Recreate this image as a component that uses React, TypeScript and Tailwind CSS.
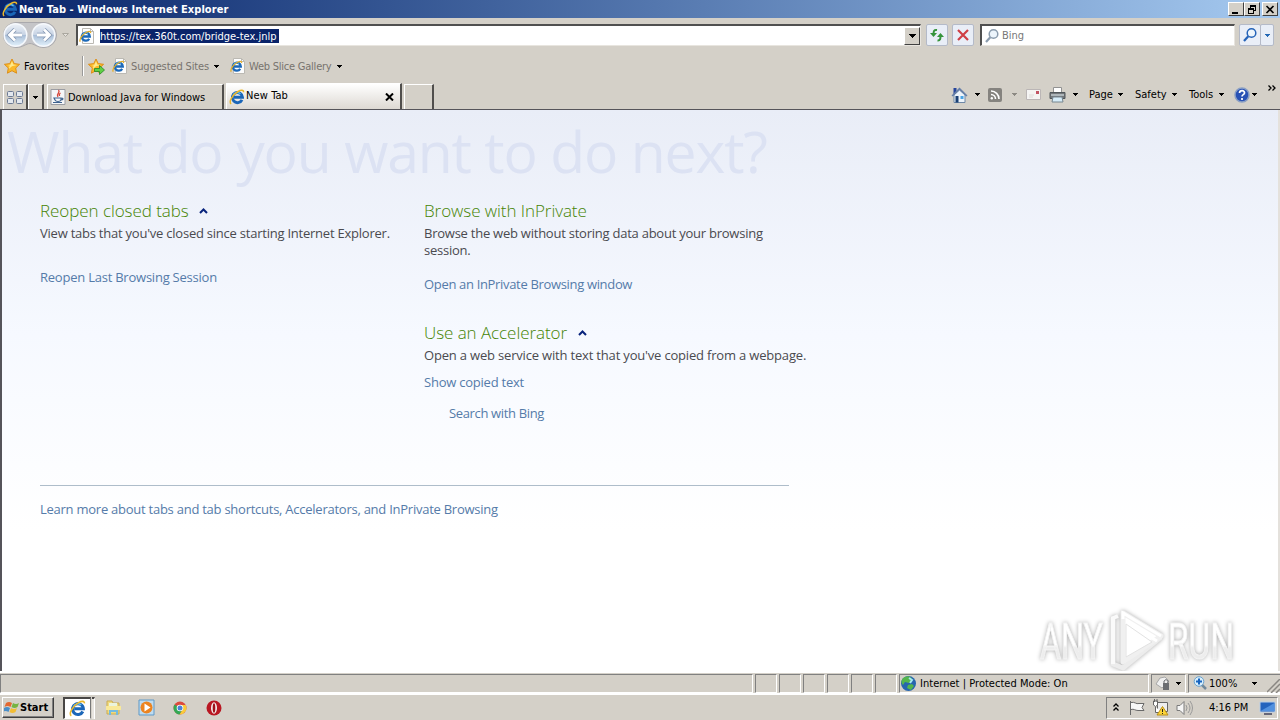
import type { ReactNode } from "react";

function Caret({ className = "", color = "#000" }: { className?: string; color?: string }) {
  return (
    <svg className={`shrink-0 ${className}`} width="5" height="3" viewBox="0 0 5 3" shapeRendering="crispEdges">
      <path d="M0 0h5v1H4v1H3v1H2V2H1V1H0z" fill={color} />
    </svg>
  );
}

function IeLogo({ size = 16, className = "" }: { size?: number; className?: string }) {
  return (
    <svg className={`shrink-0 ${className}`} width={size} height={size} viewBox="0 0 16 16" fill="none">
      <path d="M13 10.8A5.1 5.1 0 1 1 13.500 8.300H5" stroke="#1b66b8" strokeWidth="2.900" />
      <path d="M4 6.500a4.800 4.800 0 0 1 7.500-1.800" stroke="#62c3f2" strokeWidth="1.300" />
      <path d="M2.200 14.800C-.8 13.300 3.400 5.600 9 2.500c3-1.700 5.700-1.800 5.500.7" stroke="#eab72c" strokeWidth="1.500" />
    </svg>
  );
}

function IePage({ className = "" }: { className?: string }) {
  return (
    <svg className={`shrink-0 ${className}`} width="16" height="16" viewBox="0 0 16 16" fill="none">
      <path d="M3.500.500h8l3 3v12h-11z" fill="#fdfdfd" stroke="#bbb9b3" />
      <path d="M11.500.500v3h3" stroke="#bbb9b3" />
      <path d="M10.200 10.800A4 4 0 1 1 10.800 8.500H3.500" stroke="#1c69b9" strokeWidth="2.300" />
      <path d="M3.500 6.800a3.800 3.800 0 0 1 5.500-1.500" stroke="#62b9ea" />
      <path d="M1.300 13.600C-.4 11.600 4 5.700 8 4c2.500-1 4-.6 3.500 1" stroke="#e4ae28" strokeWidth="1.300" />
    </svg>
  );
}

function Star({ add = false, className = "" }: { add?: boolean; className?: string }) {
  return (
    <svg className={`shrink-0 ${className}`} width="17" height="17" viewBox="0 0 17 17">
      <path d="M8 1l2.200 4.600 5.400.7-3.900 3.700.9 5.200L8 12.700l-4.600 2.500.9-5.200L.4 6.300l5.400-.7z" fill="#fbb929" stroke="#dc8f1c" />
      <path d="M8 3l1.300 3.500 3.600.4L8 8.300 4.800 11l.9-3.400L3.400 7l3-.3z" fill="#ffe98a" />
      {add && <path d="M6.500 10.500h5v-3l5 4.500-5 4.500v-3h-5z" fill="#5fd044" stroke="#248624" strokeWidth=".8" />}
    </svg>
  );
}

function Panel({ className = "", children }: { className?: string; children?: ReactNode }) {
  return (
    <div className={`flex h-[19px] shrink-0 items-center border border-t-[#808080] border-l-[#808080] border-r-white border-b-white ${className}`}>
      {children}
    </div>
  );
}

function TitleBar() {
  const box = "flex h-[14px] w-4 items-center justify-center border border-t-white border-l-white border-r-[#404040] border-b-[#404040] bg-[#d4d0c8]";
  return (
    <header className="flex h-[18px] items-center bg-linear-to-r from-[#0a246a] to-[#a6caf0] pr-[2px] pl-[2px]">
      <IeLogo />
      <h1 className="ml-px text-[11px] leading-none font-bold tracking-[0.060px] text-white">New Tab - Windows Internet Explorer</h1>
      <div className="ml-auto flex">
        <div className={box}><svg width="10" height="9" shapeRendering="crispEdges"><path d="M1 7h6v2H1z" /></svg></div>
        <div className={box}>
          <svg width="10" height="9" fill="none" stroke="#000" shapeRendering="crispEdges">
            <path d="M3.500 5V.500h5v5H7M3 1.500h6M1.500 3.500h5v5h-5zM1 4.500h6" />
          </svg>
        </div>
        <div className={`ml-[2px] ${box}`}>
          <svg width="10" height="9" stroke="#000" strokeWidth="1.600"><path d="M1.500 1l7 7M8.500 1l-7 7" /></svg>
        </div>
      </div>
    </header>
  );
}

function NavButtons() {
  return (
    <svg className="shrink-0" width="76" height="28" viewBox="0 0 76 28" fill="none">
      <defs>
        <linearGradient id="orb" x2="0" y2="1">
          <stop stopColor="#eef2f8" />
          <stop offset=".48" stopColor="#c7d3e4" />
          <stop offset=".5" stopColor="#a8bdd7" />
          <stop offset="1" stopColor="#e2f1fb" />
        </linearGradient>
      </defs>
      <path d="M16 1.500h28a12.500 12.500 0 0 1 0 25c-7 0-10-4-14-4s-7 4-14 4a12.500 12.500 0 0 1 0-25z" fill="#c5c5c8" stroke="#aaa9ad" />
      <circle cx="15.500" cy="14" r="11.300" fill="url(#orb)" stroke="#f5f8fc" strokeWidth="1.500" />
      <circle cx="43.500" cy="14" r="11.300" fill="url(#orb)" stroke="#f5f8fc" strokeWidth="1.500" />
      <path d="M22 14H10m5-5.500L9.500 14l5.500 5.500" stroke="#8396b2" strokeWidth="4.400" />
      <path d="M22 14H10m5-5.500L9.500 14l5.500 5.500" stroke="#fff" strokeWidth="2.800" />
      <path d="M37 14h12m-5-5.500l5.500 5.500-5.500 5.500" stroke="#8396b2" strokeWidth="4.400" />
      <path d="M37 14h12m-5-5.500l5.500 5.500-5.500 5.500" stroke="#fff" strokeWidth="2.800" />
      <path d="M62.500 12.500h6l-3 3z" fill="#e5e2dd" stroke="#aaa79f" />
    </svg>
  );
}

function Magnifier({ color, className = "" }: { color: string; className?: string }) {
  return (
    <svg className={`shrink-0 ${className}`} width="16" height="16" viewBox="0 0 16 16" fill="none" stroke={color}>
      <circle cx="9.500" cy="6" r="4.300" fill="#edf5fc" strokeWidth="1.500" />
      <path d="M6.300 9.300L2 14" strokeWidth="2.200" />
    </svg>
  );
}

function AddressRow() {
  const field = "flex h-[22px] shrink-0 items-center border-t-2 border-l-2 border-r border-b border-t-[#505050] border-l-[#505050] border-r-[#e8e5df] border-b-[#e8e5df] bg-white";
  const button = "flex h-[22px] shrink-0 items-center justify-center rounded-[2px] border border-[#b4bac8] bg-[#e9eef7]";
  return (
    <div className="flex h-[34px] items-center">
      <NavButtons />
      <div className={`w-[845px] ${field}`}>
        <IePage className="ml-px" />
        <span className="ml-[5px] w-[179px] bg-[#0a246a] pt-px text-[11px] leading-[13px] tracking-[-0.010px] text-white">https://tex.360t.com/bridge-tex.jnlp</span>
        <div className="ml-auto flex h-[18px] w-4 items-center justify-center border border-t-white border-l-white border-r-[#404040] border-b-[#404040] bg-[#d4d0c8]">
          <svg width="7" height="4" shapeRendering="crispEdges"><path d="M0 0h7v1H6v1H5v1H4v1H3V3H2V2H1V1H0z" /></svg>
        </div>
      </div>
      <div className={`ml-[5px] w-[22px] ${button}`}>
        <svg width="16" height="16" viewBox="0 0 16 16" fill="none" stroke="#35943b" strokeWidth="2">
          <path d="M8 3C5 2.500 4.500 4 4.500 7.500" /><path d="M1 6l3.500 4L8 6z" fill="#35943b" stroke="none" />
          <path d="M8.500 13.500c3 .3 3-2 3-5" /><path d="M8 10l3.500-4L15 10z" fill="#35943b" stroke="none" />
        </svg>
      </div>
      <div className={`ml-1 w-[22px] ${button}`}>
        <svg width="14" height="14" viewBox="0 0 14 14" fill="none" stroke="#cf3e45" strokeWidth="2.200"><path d="M2 2l10 10M12 2L2 12" /></svg>
      </div>
      <div className={`ml-[6px] w-[255px] ${field}`}>
        <Magnifier color="#8b9cae" className="ml-[2px]" />
        <span className="ml-[2px] pt-[2px] text-[11px] text-[#777]">Bing</span>
      </div>
      <div className={`ml-1 w-[22px] ${button}`}><Magnifier color="#2463b8" /></div>
      <div className={`-ml-px w-[14px] ${button}`}><Caret color="#2468b5" /></div>
    </div>
  );
}

function FavoritesRow() {
  return (
    <div className="flex h-7 items-center text-[11px]">
      <Star className="ml-1" />
      <span className="ml-[3px] w-[58px] pt-[2px] tracking-[0.080px]">Favorites</span>
      <div className="h-5 w-[2px] border-l border-[#999] bg-white" />
      <Star add className="ml-1" />
      <IePage className="ml-[7px]" />
      <span className="ml-[3px] w-[83px] pt-[2px] tracking-[-0.120px] text-[#77736e]">Suggested Sites</span>
      <Caret />
      <IePage className="ml-[11px]" />
      <span className="ml-[3px] w-[88px] pt-[2px] tracking-[-0.230px] text-[#77736e]">Web Slice Gallery</span>
      <Caret />
    </div>
  );
}

function CommandBar() {
  return (
    <div className="ml-auto flex h-[29px] items-center self-start text-[11px]">
      <svg width="17" height="18" viewBox="0 0 16 18">
        <path d="M2 2h3v6H2z" fill="#26459c" />
        <path d="M2.500 9v7.500h11V9L8 4z" fill="#edf4fb" stroke="#6f88a7" />
        <path d="M0 9.500l8-8 8 8-1.300 1L8 4l-6.700 6.500z" fill="#667fa7" />
        <path d="M4 10h3v6.500H4z" fill="#193f73" /><path d="M9 10h3v3H9z" fill="#4aa4e5" />
      </svg>
      <Caret className="ml-[7px]" />
      <svg className="ml-[8px]" width="14" height="14" viewBox="0 0 14 14" fill="none" stroke="#fff" strokeWidth="1.600">
        <rect width="14" height="14" rx="2" fill="#85837f" stroke="none" />
        <path d="M3 6.500a4.500 4.500 0 0 1 4.500 4.500M3 3a8 8 0 0 1 8 8" /><circle cx="3.800" cy="10.200" r="1.200" fill="#fff" stroke="none" />
      </svg>
      <Caret className="ml-[10px]" color="#8c8983" />
      <svg className="ml-[9px]" width="15" height="11" viewBox="0 0 15 11">
        <path d="M.500.500h14v10H.500z" fill="#f5f4f3" stroke="#bbb6b6" /><path d="M10 2h3v3h-3z" fill="#c25363" /><path d="M3 6h5M3 8h4" stroke="#dcdad8" />
      </svg>
      <svg className="ml-[8px]" width="17" height="16" viewBox="0 0 17 16">
        <path d="M4.500 6V.500h8V6" fill="#fff" stroke="#929292" /><path d="M1 5.500h15v6H1z" fill="#73777a" stroke="#50575b" />
        <path d="M2 7h13v2H2z" fill="#aeb6ba" /><path d="M4 10h9l1 5H3z" fill="#d6ecf8" stroke="#778690" />
      </svg>
      <Caret className="ml-[7px]" />
      <span className="ml-[11px] w-[29px] pt-px">Page</span>
      <Caret />
      <span className="ml-[12px] w-[37px] pt-px">Safety</span>
      <Caret />
      <span className="ml-[12px] w-[30px] pt-px">Tools</span>
      <Caret />
      <svg className="ml-[10px]" width="16" height="16" viewBox="0 0 16 16" fill="none">
        <circle cx="8" cy="8" r="7" fill="#2952b5" stroke="#8a9fc4" strokeWidth="1.500" />
        <path d="M5.500 6c.2-3.300 5.300-3 5 0-.2 1.700-2.500 1.600-2.500 3.500M8 11v2" stroke="#fff" strokeWidth="1.700" />
      </svg>
      <Caret className="ml-[2px]" />
      <svg className="-mt-[14px] mr-[4px] ml-[11px]" width="8" height="6" fill="none" stroke="#000" strokeWidth="1.300"><path d="M.500.500L3 3 .500 5.500M4.500.500L7 3 4.500 5.500" /></svg>
    </div>
  );
}

function TabRow() {
  const tab = "flex shrink-0 items-center border-t border-l border-r-2 border-t-white border-l-white border-r-[#504e4c]";
  return (
    <div className="flex h-[30px] items-end border-b border-[#55545a] pl-[3px] text-[11px]">
      <div className={`h-[25px] w-[25px] justify-center ${tab}`}>
        <svg width="16" height="15" viewBox="0 0 16 15" fill="#e3e8ef" stroke="#6c7a94">
          <rect x=".5" y="1.500" width="6" height="5" rx="1" /><rect x="9.500" y="1.500" width="6" height="5" rx="1" />
          <rect x=".5" y="8.500" width="6" height="5" rx="1" /><rect x="9.500" y="8.500" width="6" height="5" rx="1" />
        </svg>
      </div>
      <div className={`h-[25px] w-[16px] justify-center ${tab}`}><Caret /></div>
      <div className={`ml-[3px] h-[25px] w-[177px] ${tab}`}>
        <svg className="ml-[2px] shrink-0" width="16" height="16" viewBox="0 0 16 16" fill="none">
          <path d="M1 .500h14v15H1z" fill="#f5f6f8" stroke="#9b9da3" />
          <path d="M8.500 1c2.500 3-3 3.500-.5 7M10.500 4c-2 1-1 2-1 3" stroke="#d7473b" strokeWidth="1.300" />
          <path d="M4 9h7v2c-1 2-5 2-6 0zM3 13.500h9M11 9c3 0 2 2 0 2" stroke="#3f638f" strokeWidth="1.200" />
        </svg>
        <span className="ml-[2px] pt-[2px]">Download Java for Windows</span>
      </div>
      <div className={`ml-[2px] h-[26px] w-[176px] bg-linear-to-b from-white to-[#ddd9d3] ${tab}`}>
        <IeLogo className="ml-[2px]" />
        <span className="ml-px tracking-[0.100px]">New Tab</span>
        <svg className="mr-[6px] ml-auto" width="9" height="8" stroke="#000" strokeWidth="2"><path d="M1 .500l7 7M8 .500l-7 7" /></svg>
      </div>
      <div className={`ml-[2px] h-[25px] w-[30px] ${tab}`} />
      <CommandBar />
    </div>
  );
}

function Chevron() {
  return <svg width="9" height="6" fill="none" stroke="#08237c" strokeWidth="2"><path d="M1 5l3.500-3.500L8 5" /></svg>;
}

const link = "text-[13px] leading-[17px] text-[#557ba9]";
const heading = "flex items-center text-[17px] leading-6 font-light tracking-[-0.060px] text-[#458403]";
const para = "text-[13px] leading-[17px] text-[#4a4a4f]";

function Watermark() {
  return (
    <svg className="absolute right-0 bottom-0 drop-shadow-[0_0_2px_#aaa]" width="246" height="66" viewBox="0 0 246 66" fontFamily="Roboto" fontSize="50" fontWeight="400">
      <defs>
        <linearGradient id="mark" x2="0" y2="1">
          <stop offset=".55" stopColor="#fff" />
          <stop offset=".6" stopColor="#ededed" />
        </linearGradient>
      </defs>
      <text x="8" y="54" textLength="63" lengthAdjust="spacingAndGlyphs" fill="url(#mark)" stroke="#f4f4f4">ANY</text>
      <text x="136" y="54" textLength="66" lengthAdjust="spacingAndGlyphs" fill="url(#mark)" stroke="#f4f4f4">RUN</text>
      <path d="M81 13v46l10 4 38-31" fill="none" stroke="#ececec" strokeWidth="5" strokeLinejoin="round" />
      <path d="M91 57V8l38 23z" fill="#fff" stroke="#f0f0f0" strokeWidth="5" strokeLinejoin="round" />
      <path d="M86 11l-5 2v46" fill="none" stroke="#fafafa" strokeWidth="4" />
      <path d="M91 14V8l38 23M97 19l28 17" fill="none" stroke="#fff" strokeWidth="3" />
      <path d="M94 19v33l26-15z" fill="#fff" stroke="#e2e2e2" />
    </svg>
  );
}

function NewTabPage() {
  return (
    <main className="relative h-[561px] overflow-hidden border-r-2 border-l-2 border-l-[#55545a] border-r-[#e4e1dc] bg-linear-to-b from-[#e9edf7] via-[#f6f9ff] via-40% to-white to-75% font-['Open_Sans',sans-serif]">
      <h2 className="h-[89px] pt-[3px] pl-[5px] text-[57px] leading-[76px] tracking-[-1.150px] whitespace-nowrap text-[#dce2f3]">What do you want to do next?</h2>
      <div className="flex pl-[38px]">
        <section className="w-[384px]">
          <h3 className={heading}><span className="w-[159px]">Reopen closed tabs</span><Chevron /></h3>
          <p className={`mt-[2px] tracking-[-0.230px] ${para}`}>View tabs that you've closed since starting Internet Explorer.</p>
          <a className={`mt-[27px] block tracking-[-0.230px] ${link}`}>Reopen Last Browsing Session</a>
        </section>
        <div className="w-[400px]">
          <section>
            <h3 className={heading}>Browse with InPrivate</h3>
            <p className={`mt-[2px] tracking-[-0.240px] ${para}`}>Browse the web without storing data about your browsing<br />session.</p>
            <a className={`mt-[17px] block tracking-[-0.330px] ${link}`}>Open an InPrivate Browsing window</a>
          </section>
          <section className="mt-[28px]">
            <h3 className={heading}><span className="w-[154px]">Use an Accelerator</span><Chevron /></h3>
            <p className={`mt-[2px] tracking-[-0.180px] ${para}`}>Open a web service with text that you've copied from a webpage.</p>
            <a className={`mt-[10px] block tracking-[-0.230px] ${link}`}>Show copied text</a>
            <a className={`mt-[14px] ml-[25px] block tracking-[-0.350px] ${link}`}>Search with Bing</a>
          </section>
        </div>
      </div>
      <div className="mt-[63px] ml-[38px] w-[749px] border-t border-[#aebdca] pt-[15px]">
        <a className={`block tracking-[-0.250px] ${link}`}>Learn more about tabs and tab shortcuts, Accelerators, and InPrivate Browsing</a>
      </div>
      <Watermark />
    </main>
  );
}

function StatusBar() {
  return (
    <div className="flex h-[23px] items-center gap-[2px] border-t-2 border-b border-t-white border-b-white text-[11px]">
      <Panel className="w-[753px]" />
      {[0, 1, 2, 3, 4, 5].map((i) => <Panel key={i} className="w-[22px]" />)}
      <Panel className="w-[250px]">
        <svg width="17" height="17" viewBox="0 0 17 17" fill="none">
          <circle cx="8.500" cy="8.500" r="7.500" fill="#2665ae" />
          <path d="M5 2c4-2 6 0 7 2L9 8 5 7 3 10C0 7 2 3 5 2zM8 10l4-1 2 2-3 4-4-2z" fill="#54b64c" />
          <path d="M9 3l3 2-2 3" stroke="#a5e9ef" strokeWidth="2" />
        </svg>
        <span className="ml-[3px] pt-[2px] tracking-[0.030px]">Internet | Protected Mode: On</span>
      </Panel>
      <Panel className="w-[35px] pl-[3px]">
        <svg width="17" height="17" viewBox="0 0 17 17">
          <path d="M1 9l4-6 5-1 4 4-7 7z" fill="#efefef" stroke="#a7a7a7" /><path d="M8 8h6v7H8z" fill="#6b6d71" /><path d="M9 8V6q2-3 4 0v2" fill="none" stroke="#6b6d71" />
        </svg>
        <Caret className="ml-[4px]" />
      </Panel>
      <Panel className="w-[92px] !border-r-0 pl-[4px]">
        <svg width="14" height="15" viewBox="0 0 14 15" fill="none">
          <path d="M8 8l5 5" stroke="#71899b" strokeWidth="2.500" /><circle cx="6" cy="5.500" r="4.800" fill="#d9effc" stroke="#69a1cd" /><path d="M6 2.500v6M3 5.500h6" stroke="#1764bf" strokeWidth="2" />
        </svg>
        <span className="ml-[2px] w-[43px] pt-[2px]">100%</span>
        <Caret />
        <svg className="mt-[5px] ml-auto" width="13" height="14" stroke="#8a8782" strokeWidth="1.500"><path d="M0 13L13 0M4 14l9-9M9 14l4-4" /></svg>
      </Panel>
    </div>
  );
}

function Taskbar() {
  return (
    <footer className="flex h-[26px] items-center border-t border-white pl-[2px] text-[11px]">
      <button className="flex h-[21px] w-[52px] items-center border border-t-white border-l-white border-r-[#404040] border-b-[#404040] pl-px font-bold shadow-[inset_-1px_-1px_#808080]">
        <svg className="shrink-0" width="16" height="16" viewBox="0 0 16 16">
          <path d="M2 3q3-2 6 0L6.500 7q-3-2-6 0z" fill="#e36831" /><path d="M9 3q3 2 6 0l-1.500 4q-3 2-6 0z" fill="#76b442" />
          <path d="M0 8q3-2 6 0l-1.500 4q-3-2-6 0z" fill="#498ec8" /><path d="M7 8q3 2 6 0l-1.500 4q-3 2-6 0z" fill="#f2bd34" />
        </svg>
        <span className="pt-px">Start</span>
      </button>
      <div className="ml-[9px] flex h-[22px] w-[28px] items-center justify-center border border-t-2 border-l-2 border-t-[#484644] border-l-[#484644] border-r-[#777] border-b-white bg-white"><IeLogo size={17} /></div>
      <div className="ml-px h-[22px] w-[3px] border-t-2 border-r border-t-[#484644] border-r-white bg-[#e8e5e0]" />
      <svg className="ml-[10px]" width="17" height="17" viewBox="0 0 17 17">
        <path d="M2 2h5l1 2h6v11H2z" fill="#f1da7b" stroke="#c9ac56" /><path d="M4 4h8v4H4z" fill="#ebf4dc" /><path d="M1 7h15v4H1z" fill="#f9e999" /><path d="M4 16v-5h9v5h-2v-3H6v3z" fill="#74bbdf" />
      </svg>
      <svg className="ml-[16px]" width="17" height="17" viewBox="0 0 17 17">
        <path d="M1 1h15v15H1z" fill="#bfdcf0" stroke="#5f99c7" /><circle cx="8.500" cy="8.500" r="6" fill="#ec8420" /><path d="M6.500 4.500v8l6-4z" fill="#fff" />
      </svg>
      <svg className="ml-[17px]" width="16" height="16" viewBox="0 0 16 16">
        <circle cx="8" cy="8" r="6.500" fill="#dc4a3d" /><path d="M8 8L2.500 4.600A6.500 6.500 0 0 0 7.500 14.500L11 9z" fill="#34a854" /><path d="M8 5h5.700A6.500 6.500 0 0 1 7.500 14.500L11 9z" fill="#f9cb3a" /><circle cx="8" cy="8" r="3.300" fill="#fff" /><circle cx="8" cy="8" r="2.500" fill="#4b82d5" />
      </svg>
      <svg className="ml-[18px]" width="16" height="16" viewBox="0 0 16 16"><circle cx="8" cy="8" r="7.500" fill="#b91722" /><ellipse cx="8" cy="8" rx="3" ry="5.800" fill="#f5eeee" /><ellipse cx="8" cy="8" rx="1.300" ry="4.800" fill="#9e1018" /></svg>
      <div className="mr-[2px] ml-auto flex h-[22px] w-[172px] items-center border border-t-[#808080] border-l-[#808080] border-r-white border-b-white pl-[6px]">
        <svg width="6" height="9" fill="none" stroke="#000" strokeWidth="1.300"><path d="M.500 3.500L3 1l2.500 2.500M.500 7.500L3 5l2.500 2.500" /></svg>
        <svg className="ml-[10px]" width="16" height="16" viewBox="0 0 16 16"><path d="M1.500 1v14M2 2.500c4-1 5 2 8 1h5l-2 4 2 3H9c-3 0-4-2-7-1" fill="#f7f7f7" stroke="#696969" /></svg>
        <svg className="ml-[7px]" width="17" height="17" viewBox="0 0 17 17">
          <path d="M5.500 3.500h10v9h-10z" fill="#eee" stroke="#666" /><path d="M3.500 8v5.500h7M1.500 2v4q2 3 4 0V2zM2.500 0v3M5 0v3" fill="#fff" stroke="#666" /><path d="M10.500 7.500l5.500 8.500H5z" fill="#fbd438" stroke="#ba8f17" /><path d="M10.500 10v3M10.500 14v1" stroke="#222" />
        </svg>
        <svg className="ml-[7px]" width="17" height="16" viewBox="0 0 17 16" fill="none" stroke="#7b7b7b"><path d="M1 5.500h3l4-4v13l-4-4H1z" fill="#f6f6f6" /><path d="M10 5q2 3 0 6M12 3q4 5 0 10M14 1q5 7 0 14" stroke="#999" /></svg>
        <span className="ml-[16px] w-[50px] pt-px tracking-[-0.100px]">4:16 PM</span>
        <svg className="shrink-0" width="17" height="16" viewBox="0 0 17 16"><path d="M1 2h15v10H1z" fill="#2463bd" stroke="#b9cee7" /><path d="M1.500 11L15.500 3v8z" fill="#5291df" /><path d="M5 14h8" stroke="#667" strokeWidth="2" /></svg>
      </div>
    </footer>
  );
}

export default function App() {
  return (
    <div className="h-[720px] w-[1280px] overflow-hidden bg-[#d4d0c8] font-['DejaVu_Sans_Condensed','DejaVu_Sans',sans-serif] whitespace-nowrap text-black">
      <TitleBar />
      <AddressRow />
      <FavoritesRow />
      <TabRow />
      <NewTabPage />
      <StatusBar />
      <Taskbar />
    </div>
  );
}
